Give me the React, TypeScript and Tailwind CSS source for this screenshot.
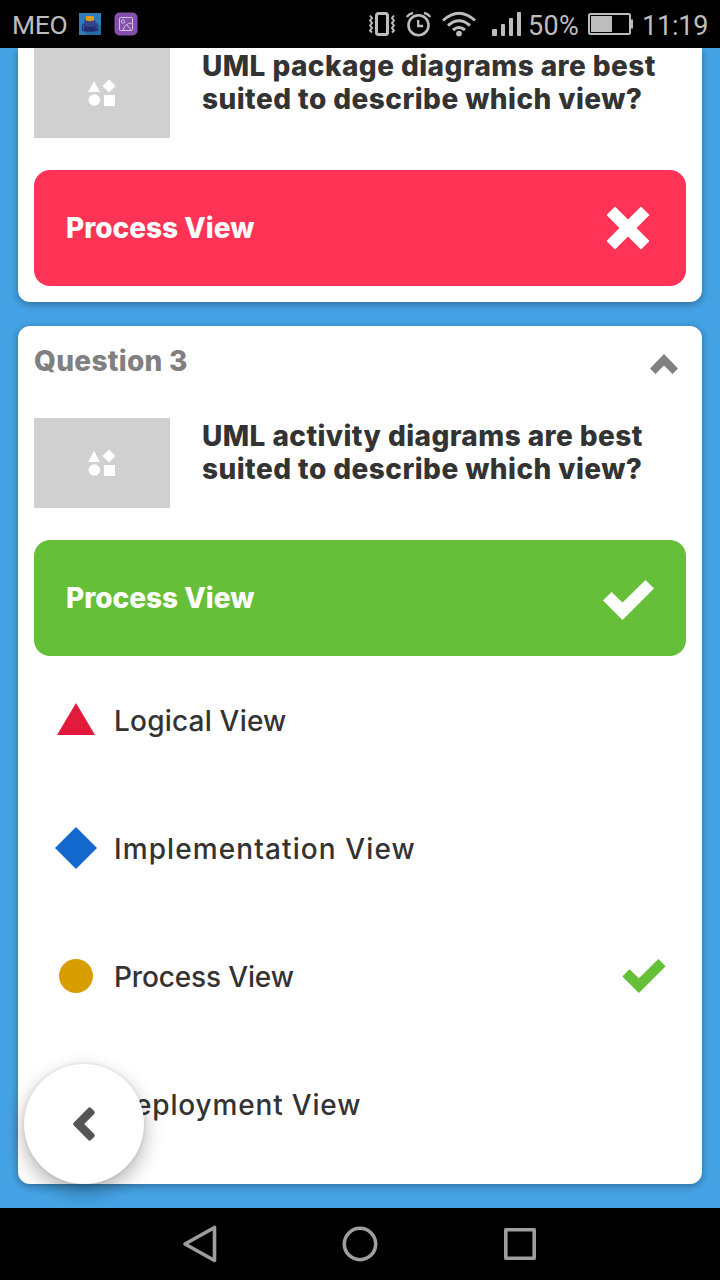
import type { ReactNode } from "react";

function StatusBar() {
  return (
    <header className="flex h-12 shrink-0 items-center bg-black font-['Roboto',sans-serif] text-[27px] leading-[48px] text-[#bdbdbd]">
      <span className="ml-3 w-[67px] whitespace-nowrap pt-[2px] text-[26.5px] tracking-[-0.3px]">MEO</span>
      <svg className="h-[22px] w-[22px]" viewBox="0 0 22 22">
        <path d="M0 0h22v22H0z" fill="#2f7db8" />
        <path d="m18 9 4 5v8H8l-4-4z" fill="#276a9e" />
        <path d="M3.500 18v-4q0-3 3-4M18.500 18v-4q0-3-3-4" fill="none" stroke="#263779" strokeWidth="1.3" />
        <path d="M6 7q5-3 10 0l2 11q-7 2-14 0z" fill="#28377d" />
        <path d="M7 3h8v6H7z" fill="#dd9c1d" />
        <path d="M4.500 12q1-4 3-4.500 3.500 1.500 7 0 3 .5 3 4.500-6.500 4-13 0z" fill="#34458c" />
        <path d="M6 14h10v4H6z" fill="#202d6c" />
      </svg>
      <svg className="ml-[13px] h-6 w-6" viewBox="0 0 24 24">
        <rect x=".5" y=".5" width="23" height="23" rx="5" fill="#8350b0" />
        <g fill="none" stroke="#d2c2de" strokeWidth="1">
          <rect x="5.500" y="5.500" width="13" height="13" rx="1" />
          <circle cx="9" cy="9.500" r="1.700" />
          <path d="M9 18q2-7 9-7M13 13l4 5" />
        </g>
      </svg>
      <svg className="ml-[231px] h-[26px] w-[26px]" viewBox="0 0 26 26" fill="none" stroke="#bdbdbd">
        <rect x="7.500" y="2.500" width="11" height="21" rx="2" strokeWidth="3" />
        <path d="M1 4.500 3 7 1 9.500 3 12l-2 2.500L3 17l-2 2.500 2 2M25 4.500 23 7l2 2.500L23 12l2 2.500L23 17l2 2.500-2 2" strokeWidth="2" />
      </svg>
      <svg className="ml-[11px] h-[26px] w-[26px]" viewBox="0 0 26 26" fill="none" stroke="#bdbdbd">
        <circle cx="12.500" cy="14.200" r="10" strokeWidth="2.600" />
        <path d="M12.200 9v6h5" strokeWidth="2.300" />
        <path d="M.8 6Q2.500 3 7 1.800M24.200 6Q22.500 3 18 1.800" strokeWidth="2.400" />
      </svg>
      <svg className="ml-[9px] h-[26px] w-9" viewBox="0 0 36 26" fill="none" stroke="#bdbdbd" strokeWidth="3">
        <path d="M2 9.500Q18-5 34 9.500M7 14.500q11-9.500 22 0M12 19q6-5 12 0" />
        <circle cx="18" cy="22.600" r="2.900" fill="#bdbdbd" stroke="none" />
      </svg>
      <svg className="ml-[15px] h-[26px] w-[30px]" viewBox="0 0 30 26" fill="#bdbdbd">
        <rect x="0" y="18" width="5" height="7" rx="1" />
        <rect x="9" y="13" width="4" height="12" rx="1" />
        <rect x="17" y="7" width="4" height="18" rx="1" />
        <rect x="25" y="1" width="4" height="24" rx="1" />
      </svg>
      <span className="ml-[6px] w-[60px] whitespace-nowrap pt-[3px] tracking-[0.3px]">50%</span>
      <svg className="h-[24px] w-[45px]" viewBox="0 0 45 24">
        <rect x="1" y="2" width="41" height="20" rx="1.500" fill="none" stroke="#bdbdbd" strokeWidth="2" />
        <path d="M3 4h21v16H3zM43 7.500h2v9h-2z" fill="#bdbdbd" />
      </svg>
      <span className="ml-[9px] whitespace-nowrap pt-[3px] tracking-[-0.2px]">11:19</span>
    </header>
  );
}

function Check({ className }: { className: string }) {
  return (
    <svg className={className} viewBox="0 0 51 40">
      <path d="M0 20.500 8.500 12 19.500 22.500 42.500 0 51 8.500 19.500 40z" fill="currentColor" />
    </svg>
  );
}

function Prompt({ children }: { children: ReactNode }) {
  return (
    <div className="flex h-[90px] gap-8">
      <div className="flex w-[136px] items-center justify-center bg-[#d0d0d0]">
        <svg className="h-7 w-7" viewBox="0 0 28 28" fill="#fff">
          <path d="M6 2 12 13H0zM21 .5 27.500 7 21 13.500 14.500 7z" />
          <circle cx="6.300" cy="21" r="5.800" />
          <path d="M16 16h11v11H16z" />
        </svg>
      </div>
      <h2 className="pt-[2px] text-[28px] font-extrabold leading-[33px] text-[#333]">{children}</h2>
    </div>
  );
}

function Answer({ color, children }: { color: string; children: ReactNode }) {
  return (
    <div className={`mt-8 flex h-[116px] items-center justify-between rounded-2xl px-8 text-white ${color}`}>
      <span className="text-[28px] font-extrabold">Process View</span>
      {children}
    </div>
  );
}

function Option({ icon, children, correct }: { icon: ReactNode; children: ReactNode; correct?: boolean }) {
  return (
    <li className="flex h-32 items-center pl-5 pr-5 text-[28px] font-medium text-[#333]">
      <svg className="mr-[16px] h-11 w-11 shrink-0" viewBox="0 0 44 44">{icon}</svg>
      <span className="flex-1 whitespace-nowrap pt-px">{children}</span>
      {correct && <Check className="h-[34px] w-11 text-[#66bf39]" />}
    </li>
  );
}

export default function App() {
  return (
    <div className="flex h-[1280px] w-[720px] flex-col overflow-hidden bg-black">
      <StatusBar />
      <main className="relative flex h-[1160px] flex-col gap-6 overflow-hidden bg-[#45a3e5] px-[18px] font-['Inter',sans-serif]">
        <section className="h-[254px] shrink-0 rounded-b-xl bg-white px-4 shadow-[0_2px_8px_rgba(0,0,0,0.35)]">
          <Prompt>
            <span className="block whitespace-nowrap tracking-[0.42px]">UML package diagrams are best</span>
            <span className="block whitespace-nowrap tracking-[0.44px]">suited to describe which view?</span>
          </Prompt>
          <Answer color="bg-[#ff3355]">
            <svg className="mr-1 h-11 w-11" viewBox="0 0 44 44">
              <path d="M9 .5 22 13.500 35 .5 43.500 9l-13 13 13 13-8.500 8.500-13-13-13 13L.5 35l13-13L.5 9z" fill="#fff" />
            </svg>
          </Answer>
        </section>
        <section className="h-[858px] shrink-0 rounded-xl bg-white p-4 shadow-[0_2px_8px_rgba(0,0,0,0.35)]">
          <div className="flex h-[76px] items-start justify-between">
            <h1 className="pt-px text-[28px] font-extrabold leading-[36px] tracking-[0.3px] text-[#808080]">Question 3</h1>
            <svg className="mr-[8px] mt-[12px] h-5 w-7" viewBox="0 0 28 20">
              <path d="M14 0 28 14.500 22.500 20 14 11.500 5.500 20 0 14.500z" fill="#808080" />
            </svg>
          </div>
          <Prompt>
            <span className="block whitespace-nowrap tracking-[0.42px]">UML activity diagrams are best</span>
            <span className="block whitespace-nowrap tracking-[0.44px]">suited to describe which view?</span>
          </Prompt>
          <Answer color="bg-[#66bf39]">
            <Check className="mt-[3px] h-10 w-[51px] text-white" />
          </Answer>
          <ul>
            <Option icon={<path d="M22 5 41 37H3z" fill="#e21b3c" />}>
              <span className="tracking-[0.2px]">Logical View</span>
            </Option>
            <Option icon={<path d="M22 1 43 22 22 43 1 22z" fill="#1368ce" />}>
              <span className="tracking-[1.1px]">Implementation View</span>
            </Option>
            <Option correct icon={<circle cx="22" cy="22" r="17" fill="#d89e00" />}>
              <span className="tracking-[-0.15px]">Process View</span>
            </Option>
            <Option icon={<path d="M6 6h32v32H6z" fill="#26890c" />}>
              <span className="tracking-[0.83px]">Deployment View</span>
            </Option>
          </ul>
        </section>
        <button
          aria-label="Back"
          className="absolute bottom-6 left-6 flex h-[120px] w-[120px] items-center justify-center rounded-full bg-white shadow-[0_8px_20px_rgba(0,0,0,0.3),0_0_4px_rgba(0,0,0,0.1)]"
        >
          <svg className="h-9 w-6" viewBox="0 0 24 36">
            <path d="M1.600 16.800 16.200 1.900q1.400-1.400 2.800 0l3.200 3.200q1.300 1.400 0 2.800L12.200 18l10 10.100q1.300 1.400 0 2.800L19 34.100q-1.400 1.400-2.800 0L1.600 19.200q-1.200-1.200 0-2.400z" fill="#555" />
          </svg>
        </button>
      </main>
      <nav className="flex h-[72px] shrink-0 items-center justify-between bg-black px-[180px]">
        <svg className="h-10 w-10" viewBox="0 0 40 40" fill="none" stroke="#9e9e9e" strokeWidth="3.600" strokeLinejoin="round">
          <path d="M34.500 3.500v33L5 20z" />
        </svg>
        <svg className="h-10 w-10" viewBox="0 0 40 40" fill="none" stroke="#9e9e9e" strokeWidth="3.600">
          <circle cx="20" cy="20" r="15.700" />
        </svg>
        <svg className="h-10 w-10" viewBox="0 0 40 40" fill="none" stroke="#9e9e9e" strokeWidth="3.600" strokeLinejoin="round">
          <path d="M5.800 5.800h28.400v28.400H5.800z" />
        </svg>
      </nav>
    </div>
  );
}
